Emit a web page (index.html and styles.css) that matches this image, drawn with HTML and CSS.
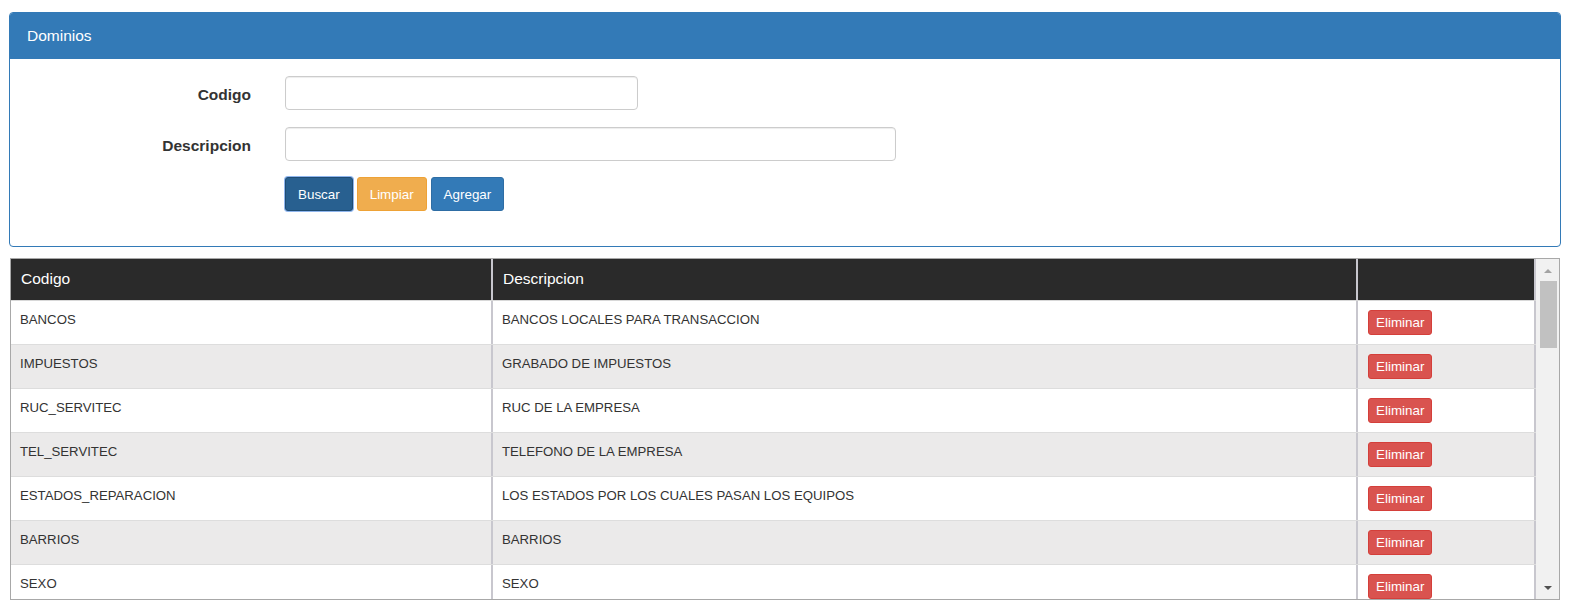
FILE: index.html
```html
<!DOCTYPE html>
<html lang="es">
<head>
<meta charset="utf-8">
<title>Dominios</title>
<link rel="stylesheet" href="styles.css">
</head>
<body>
<div class="page">
  <section class="panel">
    <div class="panel-heading">Dominios</div>
    <div class="panel-body">
      <form class="form">
        <label class="form-label" for="codigo">Codigo</label>
        <input class="form-input input-short" id="codigo" type="text">
        <label class="form-label" for="descripcion">Descripcion</label>
        <input class="form-input input-long" id="descripcion" type="text">
        <div class="form-actions">
          <button type="button" class="btn btn-buscar">Buscar</button>
          <button type="button" class="btn btn-limpiar">Limpiar</button>
          <button type="button" class="btn btn-agregar">Agregar</button>
        </div>
      </form>
    </div>
  </section>

  <section class="grid-box">
    <div class="grid-table">
      <div class="grid-row grid-head">
        <div class="cell">Codigo</div>
        <div class="cell">Descripcion</div>
        <div class="cell"></div>
      </div>
      <div class="grid-row">
        <div class="cell">BANCOS</div>
        <div class="cell">BANCOS LOCALES PARA TRANSACCION</div>
        <div class="cell cell-action"><button type="button" class="btn-del">Eliminar</button></div>
      </div>
      <div class="grid-row alt">
        <div class="cell">IMPUESTOS</div>
        <div class="cell">GRABADO DE IMPUESTOS</div>
        <div class="cell cell-action"><button type="button" class="btn-del">Eliminar</button></div>
      </div>
      <div class="grid-row">
        <div class="cell">RUC_SERVITEC</div>
        <div class="cell">RUC DE LA EMPRESA</div>
        <div class="cell cell-action"><button type="button" class="btn-del">Eliminar</button></div>
      </div>
      <div class="grid-row alt">
        <div class="cell">TEL_SERVITEC</div>
        <div class="cell">TELEFONO DE LA EMPRESA</div>
        <div class="cell cell-action"><button type="button" class="btn-del">Eliminar</button></div>
      </div>
      <div class="grid-row">
        <div class="cell">ESTADOS_REPARACION</div>
        <div class="cell">LOS ESTADOS POR LOS CUALES PASAN LOS EQUIPOS</div>
        <div class="cell cell-action"><button type="button" class="btn-del">Eliminar</button></div>
      </div>
      <div class="grid-row alt">
        <div class="cell">BARRIOS</div>
        <div class="cell">BARRIOS</div>
        <div class="cell cell-action"><button type="button" class="btn-del">Eliminar</button></div>
      </div>
      <div class="grid-row">
        <div class="cell">SEXO</div>
        <div class="cell">SEXO</div>
        <div class="cell cell-action"><button type="button" class="btn-del">Eliminar</button></div>
      </div>
    </div>
    <div class="scrollbar" aria-hidden="true">
      <div class="sb-btn sb-up"><span class="arrow-up"></span></div>
      <div class="sb-thumb"></div>
      <div class="sb-track"></div>
      <div class="sb-btn sb-down"><span class="arrow-down"></span></div>
    </div>
  </section>
</div>
</body>
</html>
```

FILE: styles.css
```css
* { box-sizing: border-box; }

html, body {
  margin: 0;
  padding: 0;
  background: #fff;
}

body {
  font-family: "Liberation Sans", Arial, sans-serif;
  color: #333;
  font-size: 13.2px;
}

.page {
  padding: 12px 11px 0 9px;
}

/* Panel */
.panel {
  border: 1px solid #337ab7;
  border-radius: 4px;
  overflow: hidden;
}

.panel-heading {
  background: #337ab7;
  color: #fff;
  height: 46px;
  line-height: 45px;
  padding: 0 17px;
  font-size: 15.5px;
}

.panel-body {
  padding: 17px 0 35px;
}

.form {
  display: grid;
  grid-template-columns: 241px auto;
  column-gap: 34px;
  row-gap: 17px;
  justify-items: start;
}

.form-label {
  justify-self: end;
  font-weight: bold;
  font-size: 15.5px;
  line-height: 34px;
  padding-top: 2px;
  margin-bottom: -2px;
  color: #333;
}

.form-input {
  height: 34px;
  border: 1px solid #ccc;
  border-radius: 4px;
  box-shadow: inset 0 1px 1px rgba(0,0,0,.075);
  padding: 6px 12px;
  font-family: inherit;
  font-size: 14px;
  background: #fff;
}

.input-short { width: 353px; }
.input-long { width: 611px; }

.form-actions {
  grid-column: 2;
  display: flex;
  gap: 4px;
  margin-top: -1px;
}

.btn {
  height: 34px;
  padding: 0 12px;
  border: 1px solid transparent;
  border-radius: 3px;
  font-family: inherit;
  font-size: 13.4px;
  color: #fff;
  cursor: pointer;
}

.btn-buscar {
  background: #286090;
  border-color: #204d74;
  box-shadow: 0 0 0 1px #8fb6ee;
}

.btn-limpiar {
  background: #f0ad4e;
  border-color: #eea236;
}

.btn-agregar {
  background: #337ab7;
  border-color: #2e6da4;
}

/* Table */
.grid-box {
  margin: 11px 1px 0 1px;
  height: 342px;
  border: 1px solid #a8a8a8;
  display: flex;
}

.grid-table {
  flex: 1;
  overflow: hidden;
}

.grid-row {
  display: grid;
  grid-template-columns: 482px 865px 1fr;
  height: 44px;
  border-bottom: 1px solid #dddddd;
  background: #fff;
}

.grid-row.alt {
  background: #ebeaea;
}

.grid-head {
  height: 42px;
  background: #2a2a2a;
  color: #fff;
  border-bottom: 1px solid #d8d8d8;
}

.cell {
  border-right: 2px solid #c8c7ce;
  padding: 9px 10px 0 9px;
  line-height: 19px;
  font-size: 13.2px;
  color: #333;
  white-space: nowrap;
  overflow: hidden;
}

.grid-head .cell {
  color: #fff;
  font-size: 15.5px;
  line-height: 20px;
  padding: 10px 10px 0 10px;
}

.cell-action {
  padding: 9px 10px 0 10px;
}

.btn-del {
  display: block;
  height: 25px;
  padding: 0 7px;
  border: 1px solid #d43f3a;
  border-radius: 3px;
  background: #d9534f;
  color: #fff;
  font-family: inherit;
  font-size: 13.4px;
  line-height: 23px;
  cursor: pointer;
}

/* Fake scrollbar */
.scrollbar {
  width: 23px;
  background: #f1f1f1;
  display: flex;
  flex-direction: column;
}

.sb-btn {
  height: 22px;
  display: flex;
  justify-content: center;
  align-items: center;
  padding-left: 1px;
}

.sb-up { align-items: flex-start; padding-top: 10px; }
.sb-down { align-items: flex-end; padding-bottom: 9px; }

.arrow-up {
  width: 0;
  height: 0;
  border-left: 4.5px solid transparent;
  border-right: 4.5px solid transparent;
  border-bottom: 4.5px solid #a3a3a3;
}

.arrow-down {
  width: 0;
  height: 0;
  border-left: 4.5px solid transparent;
  border-right: 4.5px solid transparent;
  border-top: 4.5px solid #505050;
}

.sb-thumb {
  height: 67px;
  margin: 0 2px 0 4px;
  background: #c1c1c1;
}

.sb-track {
  flex: 1;
}
```
